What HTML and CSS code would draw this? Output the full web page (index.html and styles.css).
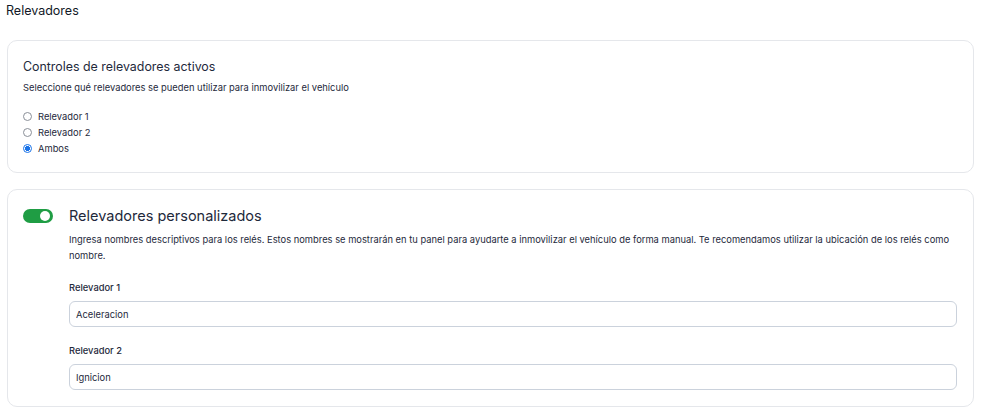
FILE: index.html
```html
<!DOCTYPE html>
<html lang="es">
<head>
<meta charset="utf-8">
<link rel="stylesheet" href="styles.css">
</head>
<body>
<main class="page">
  <h1 class="page-title">Relevadores</h1>
  <section class="card">
    <h2 class="card-title small">Controles de relevadores activos</h2>
    <p class="card-sub">Seleccione qué relevadores se pueden utilizar para inmovilizar el vehículo</p>
    <div class="radio-list">
      <label class="radio"><input type="radio" name="rel"><span>Relevador 1</span></label>
      <label class="radio"><input type="radio" name="rel"><span>Relevador 2</span></label>
      <label class="radio"><input type="radio" name="rel" checked><span>Ambos</span></label>
    </div>
  </section>
  <section class="card card-row">
    <div class="toggle on"><span class="knob"></span></div>
    <div class="card-body">
      <h2 class="card-title large">Relevadores personalizados</h2>
      <p class="desc">Ingresa nombres descriptivos para los relés. Estos nombres se mostrarán en tu panel para ayudarte a inmovilizar el vehículo de forma manual. Te recomendamos utilizar la ubicación de los relés como nombre.</p>
      <label class="field-label">Relevador 1</label>
      <input class="field" type="text" value="Aceleracion">
      <label class="field-label">Relevador 2</label>
      <input class="field" type="text" value="Ignicion">
    </div>
  </section>
</main>
</body>
</html>
```
FILE: styles.css
```css
* { box-sizing: border-box; }
html, body { margin: 0; padding: 0; background: #fff; }
body {
  font-family: Inter, "Noto Sans", sans-serif;
  color: #1e293b;
}
.page { padding: 1px 7px 0 7px; }
.page-title {
  margin: 0 0 19px -1px;
  font-size: 12.5px;
  font-weight: 400;
  line-height: 20px;
  color: #111827;
}
.card {
  border: 1px solid #e5e7eb;
  border-radius: 10px;
  padding: 16px 16px 16px 15px;
  margin-bottom: 16px;
}
.card-title {
  margin: 0;
  font-weight: 400;
  line-height: 20px;
  color: #1e293b;
}
.card-title.small { font-size: 12.4px; }
.card-title.large { font-size: 14.5px; }
.card-sub {
  margin: 3px 0 0 0;
  font-size: 9.35px;
  line-height: 16px;
  color: #1e293b;
}
.radio-list {
  margin-top: 12px;
  display: flex;
  flex-direction: column;
}
.radio {
  display: flex;
  align-items: center;
  gap: 6px;
  height: 16px;
  font-size: 9.35px;
  color: #1e293b;
}
.radio input {
  appearance: none;
  -webkit-appearance: none;
  margin: 0;
  width: 9px;
  height: 9px;
  border: 1px solid #8a8f98;
  border-radius: 50%;
  background: #fff;
}
.radio input:checked {
  border-color: #1a73e8;
  background: radial-gradient(circle, #1a73e8 0 2.3px, #fff 2.8px);
}
.card-row {
  display: flex;
  align-items: flex-start;
  gap: 16px;
}
.toggle {
  flex: none;
  margin-top: 3px;
  width: 30px;
  height: 14px;
  border-radius: 7px;
  background: #1f9d44;
  position: relative;
}
.toggle .knob {
  position: absolute;
  right: 3px;
  top: 2px;
  width: 10px;
  height: 10px;
  border-radius: 50%;
  background: #fff;
}
.card-body {
  flex: 1;
  display: flex;
  flex-direction: column;
}
.desc {
  margin: 6px 0 0 0;
  font-size: 9.35px;
  line-height: 16px;
  color: #1e293b;
}
.field-label {
  margin-top: 16px;
  font-size: 9.35px;
  font-weight: 500;
  line-height: 16px;
  color: #1e293b;
}
.field {
  margin-top: 5px;
  height: 26px;
  width: 100%;
  border: 1px solid #cbd2dc;
  border-radius: 6px;
  padding: 0 6px;
  font-family: inherit;
  font-size: 9.35px;
  color: #1e293b;
  background: #fff;
  outline: none;
}
```
